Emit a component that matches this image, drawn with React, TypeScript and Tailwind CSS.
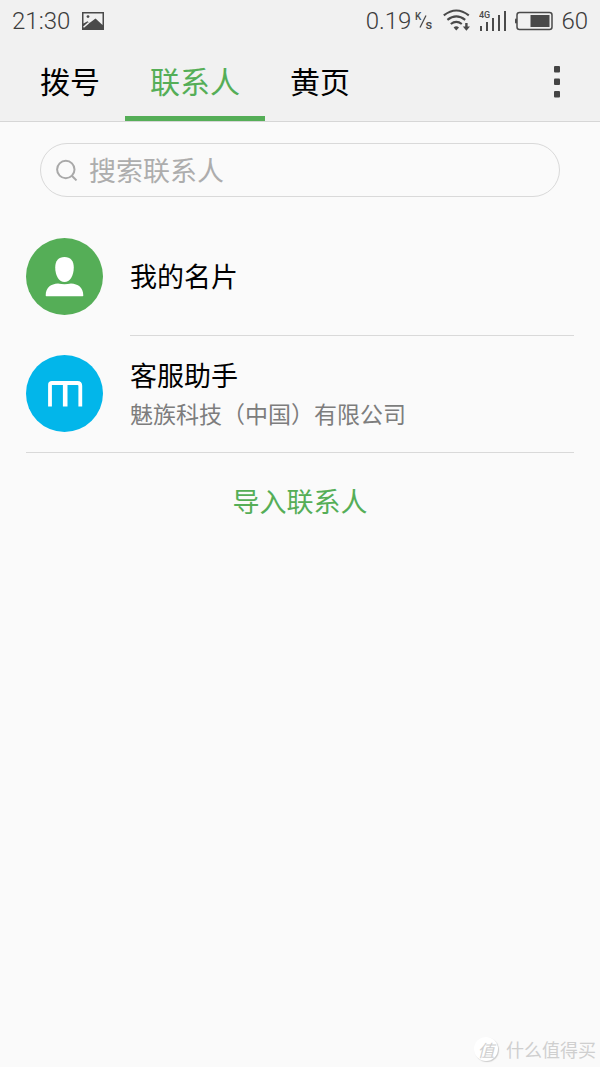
import React, { useState } from "react";

const TABS = ["拨号", "联系人", "黄页"];

function PictureIcon() {
  return (
    <svg width="22" height="18" viewBox="0 0 22 18" aria-hidden="true">
      <path fill="#4a4a4a" fillRule="evenodd" d="M0 0H22V18H0ZM1.5 1.5V11.5L5.5 9.3L7.5 11L13.5 6.5L20.5 13V1.5Z" />
      <circle cx="6" cy="4.6" r="1.4" fill="#4a4a4a" />
      <path d="M1.5 15.2L6.8 10.6" stroke="#f1f1f1" strokeWidth="1.5" />
    </svg>
  );
}

function SpeedUnitIcon() {
  return (
    <svg width="18" height="20" viewBox="0 0 18 20" fill="#4a4a4a" fontFamily="Roboto, sans-serif" aria-hidden="true">
      <text x="0" y="9" fontSize="10" fontWeight="500">K</text>
      <path d="M5 16.5L11 4.5" stroke="#4a4a4a" strokeWidth="1.2" />
      <text x="10.5" y="18" fontSize="13" fontWeight="500">s</text>
    </svg>
  );
}

function WifiIcon() {
  return (
    <svg width="28" height="23" viewBox="0 0 28 23" fill="none" stroke="#4a4a4a" strokeWidth="2.1" aria-hidden="true">
      <path d="M0.8 6.4Q13.3 -3.4 25.8 6.4" />
      <path d="M4.4 10.8Q13.3 3.8 22.2 10.8" />
      <path d="M7.8 15Q13.3 10.6 18.8 15" />
      <path d="M10.6 18.6Q13.3 16 16 18.6L13.3 21.6Z" fill="#4a4a4a" stroke="none" />
      <path d="M22.2 14H24.6V17.6H27L23.4 21.8L19.8 17.6H22.2Z" fill="#4a4a4a" stroke="none" />
    </svg>
  );
}

function SignalIcon() {
  return (
    <svg width="28" height="22" viewBox="0 0 28 22" fill="#4a4a4a" aria-hidden="true">
      <text x="0" y="8" fontSize="9" fontWeight="500" fontFamily="Roboto, sans-serif">4G</text>
      <rect x="1" y="16" width="2" height="5" />
      <rect x="7" y="12" width="2" height="9" />
      <rect x="13" y="8" width="2" height="13" />
      <rect x="19" y="5" width="2" height="16" />
      <rect x="25" y="1" width="2" height="20" />
    </svg>
  );
}

function BatteryIcon() {
  return (
    <svg width="38" height="20" viewBox="0 0 38 20" aria-hidden="true">
      <rect x="2" y="1.5" width="35" height="17" rx="2.5" fill="none" stroke="#4a4a4a" strokeWidth="1.5" />
      <rect x="0" y="7.5" width="2" height="5" rx="1" fill="#4a4a4a" />
      <rect x="15.5" y="4" width="19" height="12" fill="#4a4a4a" />
    </svg>
  );
}

function StatusBar() {
  return (
    <div className="flex h-[41px] items-center justify-between px-3 font-['Roboto','Noto_Sans_CJK_SC',sans-serif] text-2xl font-light text-[#3c3c3c]">
      <div className="flex items-center gap-3">
        <span>21:30</span>
        <PictureIcon />
      </div>
      <div className="flex items-center">
        <span className="mr-1">0.19</span>
        <SpeedUnitIcon />
        <span className="ml-2.5 flex items-center gap-2">
          <WifiIcon />
          <SignalIcon />
          <BatteryIcon />
          <span>60</span>
        </span>
      </div>
    </div>
  );
}

function PersonAvatar() {
  return (
    <svg className="size-[77px] shrink-0" viewBox="0 0 77 77" aria-hidden="true">
      <circle cx="38.5" cy="38.5" r="38.5" fill="#55ae57" />
      <path fill="#fff" d="M38.5 19C44.5 19 47.8 23 47.8 29.5C47.8 38 43.8 44 38.5 44S29.2 38 29.2 29.5C29.2 23 32.5 19 38.5 19Z" />
      <path fill="#fff" d="M19.7 57.5C19.7 49.5 25 46 32 45.6Q38.5 46.8 45 45.6C52 46 57.3 49.5 57.3 57.5Q57.3 58.2 56.6 58.2H20.4Q19.7 58.2 19.7 57.5Z" />
    </svg>
  );
}

function MeizuAvatar() {
  return (
    <svg className="size-[77px] shrink-0" viewBox="0 0 77 77" aria-hidden="true">
      <circle cx="38.5" cy="38.5" r="38.5" fill="#02b6ea" />
      <path d="M24 51.5V29.8Q24 28 26 28H51.5Q54.3 28 54.3 30.8V51.5" fill="none" stroke="#fff" strokeWidth="3.8" />
      <path d="M39.2 28V51.5" stroke="#fff" strokeWidth="4.6" />
    </svg>
  );
}

function Watermark() {
  return (
    <div className="flex items-center justify-end gap-2 pr-1 pb-1.5 text-[#cfcfcf]">
      <span className="flex size-6 items-center justify-center rounded-full bg-white text-[17px] leading-none italic shadow-[1px_1px_1px_#cccccc]">值</span>
      <span className="text-[18px] leading-6">什么值得买</span>
    </div>
  );
}

export default function App() {
  const [active, setActive] = useState("联系人");
  return (
    <div className="flex min-h-screen flex-col bg-[#fafafa] font-['Noto_Sans_CJK_SC',sans-serif] text-black">
      <header className="border-b border-[#d6d6d6] bg-[#f1f1f1]">
        <StatusBar />
        <div className="flex h-20 items-stretch justify-between pr-[27px] pl-[15px]">
          <nav className="flex">
            {TABS.map((tab) => (
              <button
                key={tab}
                type="button"
                onClick={() => setActive(tab)}
                className={
                  tab === active
                    ? "border-b-5 border-[#55ae57] px-[25px] pt-0.5 text-[30px] leading-none text-[#55ae57]"
                    : "border-b-5 border-transparent px-[25px] pt-0.5 text-[30px] leading-none"
                }
              >
                {tab}
              </button>
            ))}
          </nav>
          <button type="button" aria-label="更多" className="flex w-8 items-center justify-center pt-0.5">
            <svg width="6" height="32" viewBox="0 0 6 32" fill="#444444" aria-hidden="true">
              <rect y="0" width="6" height="6.5" rx="1" />
              <rect y="12.5" width="6" height="6.5" rx="1" />
              <rect y="25" width="6" height="6.5" rx="1" />
            </svg>
          </button>
        </div>
      </header>

      <main className="flex flex-1 flex-col">
        <label className="mx-10 mt-[21px] flex h-[54px] items-center gap-[11px] rounded-full border border-[#d9d9d9] px-[15px]">
          <svg className="shrink-0" width="22" height="22" viewBox="0 0 22 22" fill="none" stroke="#a9a9a9" strokeWidth="2" aria-hidden="true">
            <circle cx="9.8" cy="10.5" r="8.7" />
            <path d="M15.8 16.7L20.5 21.4" />
          </svg>
          <input
            type="text"
            aria-label="搜索联系人"
            placeholder="搜索联系人"
            className="h-10 min-w-0 flex-1 bg-transparent text-[27px] outline-none placeholder:text-[#adadad]"
          />
        </label>

        <ul className="mt-[21px] px-[26px]">
          <li className="flex gap-[27px]">
            <div className="flex items-center pb-0.5">
              <PersonAvatar />
            </div>
            <div className="flex h-[118px] flex-1 items-center border-b border-[#d9d9d9] pb-0.5 text-[27px] leading-9">
              我的名片
            </div>
          </li>
          <li className="flex h-[117px] items-center gap-[27px] border-b border-[#d9d9d9] pb-0.5">
            <MeizuAvatar />
            <div>
              <p className="text-[27px] leading-10">客服助手</p>
              <p className="text-[23px] leading-9 text-[#7d7d7d]">魅族科技（中国）有限公司</p>
            </div>
          </li>
        </ul>

        <button type="button" className="mt-7 self-center px-6 text-[27px] leading-10 text-[#55ae57]">
          导入联系人
        </button>
      </main>

      <Watermark />
    </div>
  );
}
